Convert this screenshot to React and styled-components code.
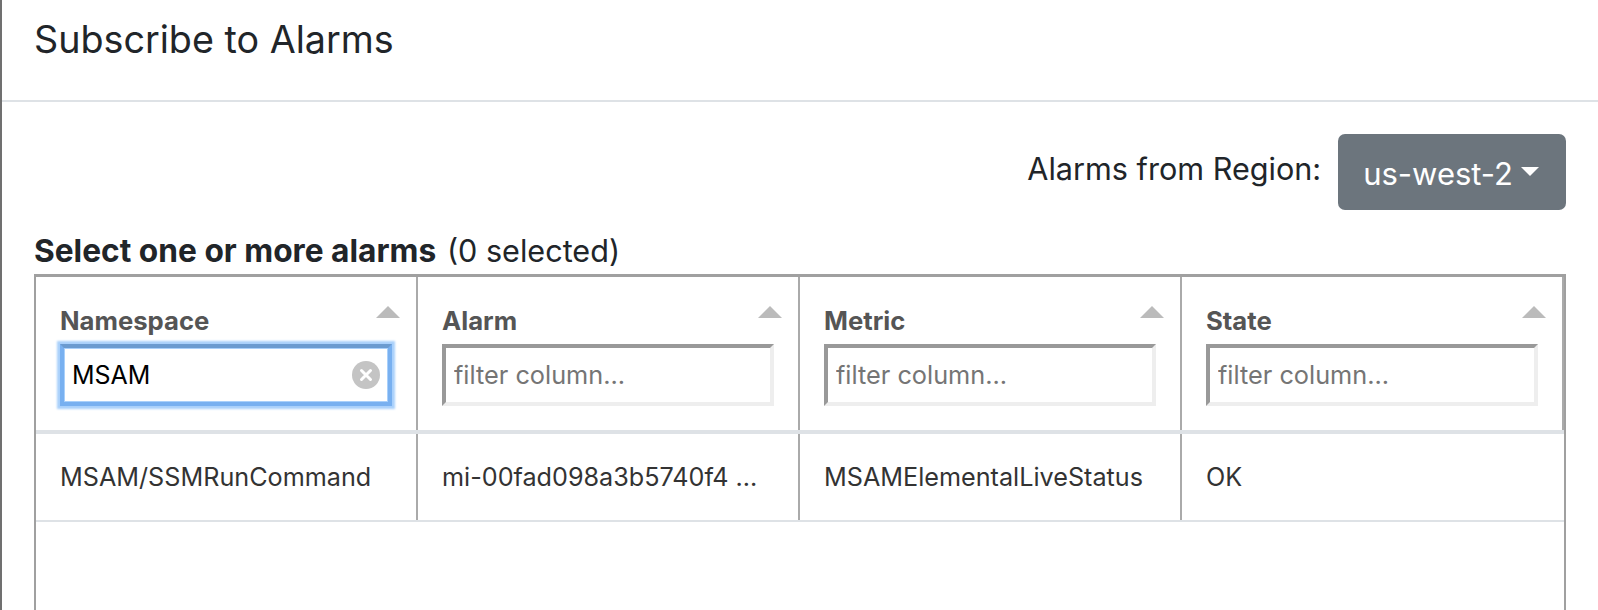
import React from 'react';
import styled, { createGlobalStyle } from 'styled-components';

const GlobalStyle = createGlobalStyle`
  html, body {
    margin: 0;
    height: 610px;
    overflow: hidden;
    background: #fff;
  }
  * {
    box-sizing: border-box;
  }
`;

const Page = styled.div`
  position: relative;
  height: 610px;
  overflow: hidden;
  border-left: 2px solid #707070;
  font-family: Inter, "Liberation Sans", sans-serif;
  color: #212529;

  /* bit of the page behind the dialog, showing at the edge */
  &::before {
    content: '';
    position: absolute;
    left: -2px;
    top: 75px;
    width: 2px;
    height: 17px;
    background: linear-gradient(#2f3a46 0 35%, #8a8f94 35% 50%, #2f3a46 50% 100%);
  }
`;

const ModalHeader = styled.header`
  height: 102px;
  padding: 16px 32px 0;
  border-bottom: 2px solid #dee2e6;
`;

const Title = styled.h5`
  margin: 0;
  font-size: 37.7px;
  line-height: 46px;
  font-weight: 400;
`;

const ModalBody = styled.div`
  padding: 32px 32px 0;
`;

const RegionBar = styled.div`
  display: flex;
  justify-content: flex-end;
  align-items: flex-start;
  gap: 17px;
`;

const RegionLabel = styled.span`
  font-size: 30.6px;
  line-height: 70px;
`;

const Dropdown = styled.button`
  display: flex;
  align-items: center;
  height: 76px;
  padding: 3px 27px 0 25px;
  border: 0;
  border-radius: 7px;
  background: #6c757d;
  color: #fff;
  font: inherit;
  font-size: 31px;
`;

const Caret = styled.span`
  margin-left: 8px;
  margin-top: -5px;
  border-top: 9px solid #fff;
  border-left: 9px solid transparent;
  border-right: 9px solid transparent;
`;

const SectionLabel = styled.div`
  margin-top: 24px;
  font-size: 30.6px;
  line-height: 34px;
  height: 40px;

  b {
    font-size: 31.7px;
    margin-right: 2px;
  }
`;

const Table = styled.div`
  height: 400px;
  border: 2px solid #a0a0a0;
  border-top-width: 3px;
  border-bottom: 0;
`;

const HeadRow = styled.div`
  display: grid;
  grid-template-columns: repeat(4, 382px);
  height: 157px;
  border-bottom: 4px solid #dee2e6;
`;

const HeadCell = styled.div`
  position: relative;
  padding: 29px 24px 0 24px;
  border-right: 2px solid #aaa;
`;

const ColumnTitle = styled.div`
  font-size: 25.7px;
  line-height: 30px;
  font-weight: 700;
  color: #555;
`;

const SortArrow = styled.span`
  position: absolute;
  top: 29px;
  right: 16px;
  border-bottom: 12px solid #bbb;
  border-left: 12px solid transparent;
  border-right: 12px solid transparent;
`;

const FilterWrap = styled.div`
  position: relative;
  margin-top: 8px;
  width: 332px;
`;

const FilterInput = styled.input`
  display: block;
  width: 100%;
  height: 62px;
  padding: 0 8px;
  border: 4px solid;
  border-color: ${(p) => (p.$focused ? '#6b9bd0 #78b0f0 #78b0f0 #78b0f0' : '#999 #eee #eee #999')};
  outline: 0;
  box-shadow: ${(p) => (p.$focused ? '0 0 2px 3px #a9d0fb, inset 0 0 0 1px #a9d0fb' : 'none')};
  background: #fff;
  color: #000;
  font-family: inherit;
  font-size: 25px;

  &::placeholder {
    color: #757575;
    opacity: 1;
    font-size: 25.3px;
  }
`;

const ClearButton = styled.span`
  position: absolute;
  top: 17px;
  right: 12px;
  width: 28px;
  height: 28px;
`;

const BodyRow = styled.div`
  display: grid;
  grid-template-columns: repeat(4, 382px);
  height: 88px;
  border-bottom: 2px solid #dee2e6;
`;

const BodyCell = styled.div`
  display: flex;
  align-items: center;
  padding: 0 24px;
  font-size: 25.2px;
  color: #333;
  white-space: nowrap;
  border-right: ${(p) => (p.$last ? '0' : '2px solid #aaa')};
`;

const columns = ['Namespace', 'Alarm', 'Metric', 'State'];
const row = ['MSAM/SSMRunCommand', 'mi-00fad098a3b5740f4 ...', 'MSAMElementalLiveStatus', 'OK'];

export default function App() {
  return (
    <Page>
      <GlobalStyle />
      <ModalHeader>
        <Title>Subscribe to Alarms</Title>
      </ModalHeader>
      <ModalBody>
        <RegionBar>
          <RegionLabel>Alarms from Region:</RegionLabel>
          <Dropdown>
            us-west-2
            <Caret />
          </Dropdown>
        </RegionBar>
        <SectionLabel>
          <b>Select one or more alarms</b> (0 selected)
        </SectionLabel>
        <Table>
          <HeadRow>
            {columns.map((name, i) => (
              <HeadCell key={name}>
                <SortArrow />
                <ColumnTitle>{name}</ColumnTitle>
                <FilterWrap>
                  <FilterInput
                    $focused={i === 0}
                    placeholder="filter column..."
                    defaultValue={i === 0 ? 'MSAM' : undefined}
                  />
                  {i === 0 && (
                    <ClearButton>
                      <svg width="28" height="28" viewBox="0 0 28 28">
                        <circle cx="14" cy="14" r="14" fill="#c4c4c4" />
                        <path d="M9.5 9.5l9 9M18.5 9.5l-9 9" stroke="#fff" strokeWidth="3" strokeLinecap="round" />
                      </svg>
                    </ClearButton>
                  )}
                </FilterWrap>
              </HeadCell>
            ))}
          </HeadRow>
          <BodyRow>
            {row.map((text, i) => (
              <BodyCell key={text} $last={i === row.length - 1}>{text}</BodyCell>
            ))}
          </BodyRow>
        </Table>
      </ModalBody>
    </Page>
  );
}
